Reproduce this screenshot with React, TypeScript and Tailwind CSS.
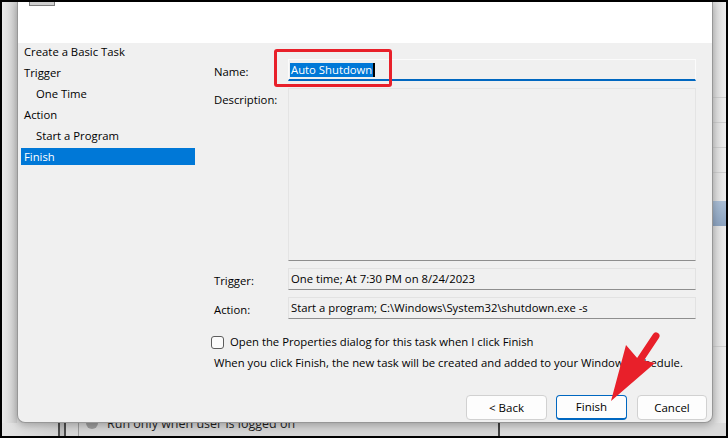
const navItems = [
  { label: 'Create a Basic Task', indent: false, active: false },
  { label: 'Trigger', indent: false, active: false },
  { label: 'One Time', indent: true, active: false },
  { label: 'Action', indent: false, active: false },
  { label: 'Start a Program', indent: true, active: false },
  { label: 'Finish', indent: false, active: true },
];

function Nav() {
  return (
    <div className="ml-[3px] flex w-[174px] flex-col gap-[4px]">
      {navItems.map(item => (
        <div
          key={item.label}
          className={
            'h-[17px] whitespace-nowrap leading-[17px] ' +
            (item.indent ? 'pl-[15px] ' : 'pl-[3px] ') +
            (item.active ? 'bg-[#0078d7] text-white' : '')
          }
        >
          {item.label}
        </div>
      ))}
    </div>
  );
}

function ReadField({ text }: { text: string }) {
  return (
    <div className="h-[22px] flex-1 border border-[#e2e2e2] border-b-[#8e8e8e] pl-[2px] leading-[20px] whitespace-nowrap">
      {text}
    </div>
  );
}

function Form() {
  return (
    <div className="ml-[19px] flex w-[482px] flex-col pt-[16px]">
      <div className="flex">
        <div className="mt-[5px] w-[74px] leading-[16px]">Name:</div>
        <div className="relative h-[22px] flex-1 border border-[#fbfbfb] border-b-2 border-b-[#0067c0] pl-[1px] pt-[3px]">
          <div className="flex items-center">
            <span className="bg-[#0078d7] px-[1px] leading-[14px] text-white">Auto Shutdown</span>
            <span className="inline-block h-[14px] w-[2px] bg-black" />
          </div>
          <div className="pointer-events-none absolute left-[-15px] top-[-11px] h-[38px] w-[118px] rounded-[3px] border-[3px] border-[#e8202a]" />
        </div>
      </div>

      <div className="mt-[7px] flex">
        <div className="mt-[4px] w-[74px] leading-[16px]">Description:</div>
        <div className="h-[173px] flex-1 border border-[#e4e4e4] border-b-[#8e8e8e]" />
      </div>

      <div className="mt-[7px] flex">
        <div className="mt-[5px] w-[74px] leading-[16px]">Trigger:</div>
        <ReadField text="One time; At 7:30 PM on 8/24/2023" />
      </div>

      <div className="mt-[7px] flex">
        <div className="mt-[5px] w-[74px] leading-[16px]">Action:</div>
        <ReadField text="Start a program; C:\Windows\System32\shutdown.exe -s" />
      </div>

      <div className="-ml-[3px] mt-[15px] flex h-[16px] items-center gap-[6px]">
        <div className="h-[13px] w-[13px] rounded-[3px] border border-[#5d5d5d] bg-[#fbfbfb]" />
        <span className="whitespace-nowrap leading-[16px]">Open the Properties dialog for this task when I click Finish</span>
      </div>

      <div className="mt-[5px] whitespace-nowrap leading-[16px]">
        When you click Finish, the new task will be created and added to your Windows Schedule.
      </div>
    </div>
  );
}

function Buttons() {
  return (
    <div className="mt-auto flex justify-end gap-[9px] pb-[2px] pr-[5px] text-[11.5px]">
      <button className="h-[25px] w-[81px] rounded-[4px] border border-[#d1d1d1] bg-[#fdfdfd]">&lt; Back</button>
      <button className="h-[25px] w-[71px] rounded-[4px] border border-[#0067c0] border-b-2 bg-[#fdfdfd]">Finish</button>
      <button className="ml-[1px] h-[25px] w-[70px] rounded-[4px] border border-[#d1d1d1] bg-[#fdfdfd]">Cancel</button>
    </div>
  );
}

function Dialog() {
  return (
    <div className="relative z-10 flex w-[696px] flex-col rounded-b-[8px] border-x border-b border-[#979797] bg-[#f0f0f0] shadow-[0_2px_8px_rgba(0,0,0,0.28)]">
      <div className="h-[41px] bg-white pl-[11px]">
        <div className="h-[4px] w-[26px] border-x border-b border-[#7d7d7d] bg-[#cfcfcf]" />
      </div>
      <div className="flex flex-1 flex-col rounded-b-[8px]">
        <div className="flex">
          <Nav />
          <Form />
        </div>
        <Buttons />
      </div>
    </div>
  );
}

function RightStrip() {
  return (
    <div className="flex w-[13px] flex-col bg-linear-to-r from-[#d9d9d9] to-[#ececec]">
      <div className="h-[95px]" />
      <div className="h-[25px] border-t border-[#cdcdcd]" />
      <div className="h-[25px] border-t border-[#cdcdcd]" />
      <div className="h-[25px] border-t border-[#cdcdcd]" />
      <div className="h-[29px] border-t border-[#cdcdcd]" />
      <div className="h-[25px] bg-linear-to-b from-[#a9bdd4] to-[#8ba2bf]" />
      <div className="h-[120px]" />
      <div className="flex-1 border-t border-[#cdcdcd]" />
    </div>
  );
}

function BottomStrip() {
  return (
    <div className="flex h-[13px] overflow-hidden bg-[#d5d5d5]">
      <div className="w-[56px] bg-linear-to-r from-[#e4e4e4] to-[#d2d2d2]" />
      <div className="w-[8px] border-x-2 border-[#4a4a4a] bg-[#bdbdbd]" />
      <div className="w-[12px]" />
      <div className="w-px bg-[#9c9c9c]" />
      <div className="flex w-[419px] items-start gap-[9px] pl-[7px]">
        <div className="-mt-[6px] h-[12px] w-[12px] shrink-0 rounded-full bg-[#9b9b9b]" />
        <span className="-mt-[7px] whitespace-nowrap text-[12.5px] leading-[16px] text-[#1e1e1e]">Run only when user is logged on</span>
      </div>
      <div className="w-[2px] bg-[#3f3f3f]" />
      <div className="flex-1 bg-[#dadada]" />
    </div>
  );
}

function Arrow() {
  return (
    <svg
      className="pointer-events-none absolute left-[-2px] top-[-2px] z-20"
      width="728"
      height="438"
      viewBox="0 0 728 438"
    >
      <line x1="656" y1="336" x2="636" y2="366" stroke="#e8202a" strokeWidth="7" strokeLinecap="round" />
      <polygon points="611,401 626,345 638,359 655,363" fill="#e8202a" />
    </svg>
  );
}

export default function App() {
  return (
    <div className="relative flex h-[438px] w-[728px] flex-col overflow-hidden border-2 border-black bg-[#dcdcdc] font-['Open_Sans',sans-serif] text-[11.3px] text-black">
      <div className="flex h-[421px]">
        <div className="w-[15px] bg-linear-to-r from-[#e9e9e9] to-[#cdcdcd]" />
        <Dialog />
        <RightStrip />
      </div>
      <BottomStrip />
      <Arrow />
    </div>
  );
}
